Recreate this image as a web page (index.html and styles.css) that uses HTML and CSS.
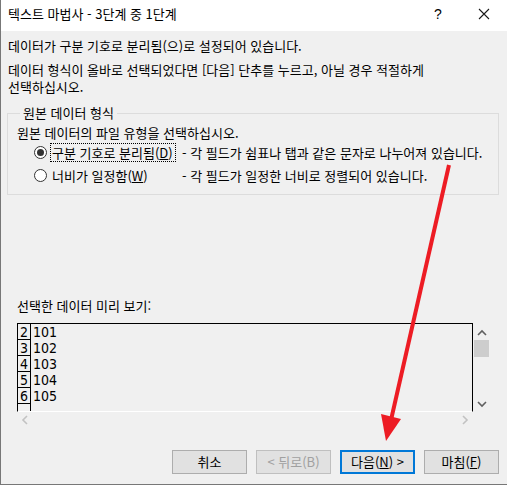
FILE: index.html
```html
<!DOCTYPE html>
<html lang="ko">

<head>
    <meta charset="UTF-8">
    <meta name="viewport" content="width=device-width, initial-scale=1.0">
    <title>텍스트 마법사</title>

    <link rel="stylesheet" href="styles.css">
</head>

<body>
    <div class="window">
        <div class="titlebar">
            <span class="title">텍스트 마법사 - 3단계 중 1단계</span>
            <span class="help">?</span>
            <span class="close">
                <svg width="12" height="12" viewBox="0 0 12 12">
                    <path d="M1 1 L11 11 M11 1 L1 11" stroke="#1a1a1a" stroke-width="1.1" fill="none" />
                </svg>
            </span>
        </div>

        <div class="content">
            <p class="intro">데이터가 구분 기호로 분리됨(으)로 설정되어 있습니다.</p>
            <p class="hint">데이터 형식이 올바로 선택되었다면 [다음] 단추를 누르고, 아닐 경우 적절하게</p>
            <p class="hint-2">선택하십시오.</p>

            <fieldset class="group">
                <legend>원본 데이터 형식</legend>
                <p class="group-text">원본 데이터의 파일 유형을 선택하십시오.</p>
                <div class="option">
                    <span class="radio checked"></span>
                    <span class="option-label focus">구분 기호로 분리됨(<u>D</u>)</span>
                    <span class="option-desc">- 각 필드가 쉼표나 탭과 같은 문자로 나누어져 있습니다.</span>
                </div>
                <div class="option">
                    <span class="radio"></span>
                    <span class="option-label">너비가 일정함(<u>W</u>)</span>
                    <span class="option-desc">- 각 필드가 일정한 너비로 정렬되어 있습니다.</span>
                </div>
            </fieldset>

            <p class="preview-label">선택한 데이터 미리 보기:</p>

            <div class="preview">
                <div class="preview-main">
                    <div class="rows">
                        <div class="row"><span class="num">2</span><span class="val">101</span></div>
                        <div class="row"><span class="num">3</span><span class="val">102</span></div>
                        <div class="row"><span class="num">4</span><span class="val">103</span></div>
                        <div class="row"><span class="num">5</span><span class="val">104</span></div>
                        <div class="row"><span class="num">6</span><span class="val">105</span></div>
                        <div class="row"><span class="num"></span><span class="val"></span></div>
                    </div>
                    <div class="vscroll">
                        <svg width="10" height="7" viewBox="0 0 10 7"><path d="M1 6 L5 2 L9 6" stroke="#606060" stroke-width="1.6" fill="none" /></svg>
                        <div class="thumb"></div>
                        <div class="spacer"></div>
                        <svg width="10" height="7" viewBox="0 0 10 7"><path d="M1 1 L5 5 L9 1" stroke="#606060" stroke-width="1.6" fill="none" /></svg>
                    </div>
                </div>
                <div class="hscroll">
                    <svg width="7" height="10" viewBox="0 0 7 10"><path d="M6 1 L2 5 L6 9" stroke="#c2c2c2" stroke-width="1.6" fill="none" /></svg>
                    <svg width="7" height="10" viewBox="0 0 7 10"><path d="M1 1 L5 5 L1 9" stroke="#c2c2c2" stroke-width="1.6" fill="none" /></svg>
                </div>
            </div>

            <div class="buttons">
                <button>취소</button>
                <button class="disabled">&lt; 뒤로(B)</button>
                <button class="default">다음(<u>N</u>) &gt;</button>
                <button>마침(<u>F</u>)</button>
            </div>
        </div>

        <svg class="arrow" width="507" height="485" viewBox="0 0 507 485">
            <line x1="449" y1="165" x2="391" y2="420" stroke="#ed1c24" stroke-width="4" />
            <polygon points="381,414 401,419 386,441" fill="#ed1c24" />
        </svg>
    </div>
</body>

</html>
```

FILE: styles.css
```css
* {
    box-sizing: border-box;
}

body {
    margin: 0;
    font-family: "Noto Sans CJK KR", "Noto Sans", sans-serif;
    font-size: 13px;
    color: #000;
}

p {
    margin: 0;
}

.window {
    position: relative;
    width: 507px;
    height: 485px;
    background: #f0f0f0;
    border-left: 1px solid #777;
    border-bottom: 1px solid #777;
    overflow: hidden;
}

.titlebar {
    display: flex;
    align-items: center;
    height: 31px;
    background: #fff;
    padding-left: 7px;
}

.title {
    flex: 1;
    line-height: 16px;
    padding-bottom: 3px;
}

.help {
    width: 46px;
    text-align: center;
    font-family: "Liberation Sans", sans-serif;
    font-size: 14px;
    padding-bottom: 3px;
}

.close {
    width: 46px;
    display: flex;
    justify-content: center;
    padding-bottom: 3px;
}

.content {
    padding: 0 8px 0 6px;
}

.intro {
    margin: 7px 0 0 1px;
    line-height: 16px;
}

.hint {
    margin: 7px 0 0 1px;
    line-height: 17px;
}

.hint-2 {
    margin-left: 1px;
    line-height: 17px;
}

.group {
    margin: 10px 0 0 0;
    padding: 0 8px 7px 9px;
    border: 1px solid #dcdcdc;
}

.group legend {
    padding: 0 3px;
    margin-left: 3px;
    line-height: 16px;
}

.group-text {
    line-height: 16px;
    margin-top: 4px;
}

.option {
    display: flex;
    align-items: center;
    height: 23px;
}

.radio {
    width: 13px;
    height: 13px;
    border: 1px solid #333;
    border-radius: 50%;
    background: #fff;
    margin-left: 17px;
    display: flex;
    align-items: center;
    justify-content: center;
    flex-shrink: 0;
}

.radio.checked::after {
    content: "";
    width: 7px;
    height: 7px;
    border-radius: 50%;
    background: #333;
}

.option-label {
    width: 132px;
    margin-left: 3px;
    line-height: 17px;
    padding: 0 1px;
    border: 1px solid transparent;
    white-space: nowrap;
    flex-shrink: 0;
}

.option-label.focus {
    border: 1px dotted #000;
    width: 126px;
    margin-right: 6px;
}

.option-desc {
    line-height: 17px;
    white-space: nowrap;
}

.preview-label {
    margin: 103px 0 0 10px;
    line-height: 16px;
}

.preview {
    margin: 9px 9px 0 10px;
}

.preview-main {
    display: flex;
    height: 89px;
}

.rows {
    flex: 1;
    border: 1px solid #000;
    border-bottom: 1px solid #fff;
    overflow: hidden;
    font-family: "Liberation Sans Narrow", "DejaVu Sans Condensed", "Liberation Sans", sans-serif;
    font-size: 14px;
}

.row {
    display: flex;
    height: 16px;
    line-height: 16px;
}

.num {
    width: 13px;
    border-right: 1px solid #000;
    border-bottom: 1px solid #000;
    text-align: right;
    padding-right: 2px;
}

.val {
    padding-left: 2px;
}

.vscroll {
    width: 17px;
    display: flex;
    flex-direction: column;
    align-items: center;
    padding: 6px 0 4px;
}

.thumb {
    width: 15px;
    height: 17px;
    background: #cdcdcd;
    margin-top: 4px;
}

.spacer {
    flex: 1;
}

.hscroll {
    display: flex;
    justify-content: space-between;
    height: 16px;
    align-items: center;
    padding: 0 21px 0 4px;
}

.buttons {
    display: flex;
    justify-content: flex-end;
    gap: 9px;
    margin-top: 22px;
}

button {
    width: 75px;
    height: 24px;
    background: #e1e1e1;
    border: 1px solid #adadad;
    font-family: "Noto Sans CJK KR", "Noto Sans", sans-serif;
    font-size: 13px;
    color: #000;
    padding: 0;
    line-height: 16px;
}

button.disabled {
    color: #a0a0a0;
    border-color: #bfbfbf;
}

button.default {
    border: 2px solid #0078d7;
}

.arrow {
    position: absolute;
    left: -1px;
    top: 0;
    pointer-events: none;
}
```
